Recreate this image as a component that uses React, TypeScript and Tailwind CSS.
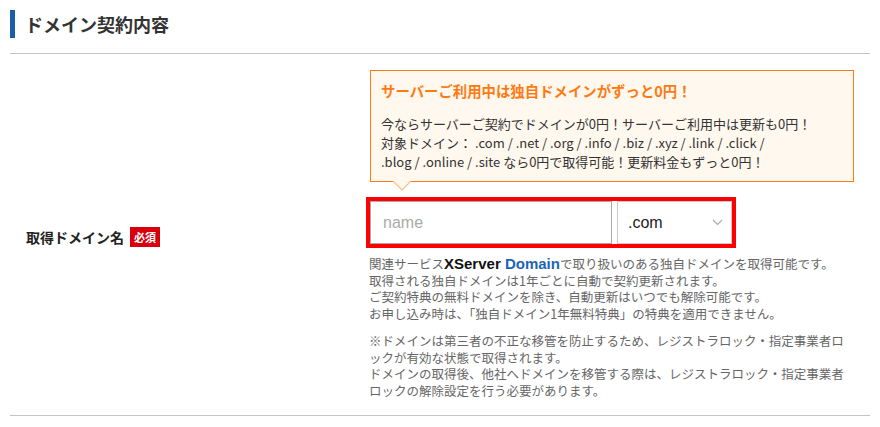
import React from "react";

const jp = { fontFamily: '"Noto Sans CJK JP", "Noto Sans", sans-serif' };
const latin = { fontFamily: '"Liberation Sans", Arial, sans-serif' };

export default function App() {
  return (
    <div className="w-[880px] h-[427px] bg-white text-[#333] overflow-hidden" style={jp}>
      <div className="pt-[10px] px-[10px]">
        <div className="border-l-[5px] border-[#1a5ea8] pl-[10px] h-[28px] flex items-center">
          <h2 className="text-[18px] font-bold leading-[28px] text-[#333]">ドメイン契約内容</h2>
        </div>
        <div className="mt-[15px] border-t border-[#c4c4c4]" />
        <div className="flex h-[362px] border-b border-[#c4c4c4]">
          <div className="w-[356px] flex items-center pl-[16px] pt-[4px]">
            <span className="text-[14px] font-bold leading-[20px] text-[#222]">取得ドメイン名</span>
            <span className="ml-[6px] bg-[#d9000d] text-white text-[11px] font-bold leading-[20px] px-[4px]">必須</span>
          </div>
          <div className="flex-1 pt-[16px]">
            <div className="relative ml-[4px] w-[484px] border border-[#ff7a12] bg-[#fff8ee] px-[10px] pt-[10px] pb-[10px]">
              <p className="text-[14.4px] font-bold leading-[20px] text-[#ff7a12]">サーバーご利用中は独自ドメインがずっと0円！</p>
              <p className="mt-[13px] text-[13px] leading-[19px] text-[#333] whitespace-nowrap">
                今ならサーバーご契約でドメインが0円！サーバーご利用中は更新も0円！<br />
                対象ドメイン： .com / .net / .org / .info / .biz / .xyz / .link / .click /<br />
                .blog / .online / .site なら0円で取得可能！更新料金もずっと0円！
              </p>
              <svg className="absolute left-[21px] bottom-[-10px]" width="20" height="10" viewBox="0 0 20 10">
                <path d="M1 0 L10 9 L19 0" fill="#fff8ee" stroke="#fbbf80" strokeWidth="1.2" />
              </svg>
            </div>
            <div className="mt-[15px] w-[370px] border-4 border-[#ff0000] flex gap-[5px]">
              <div className="w-[242px] h-[43px] border border-[#a9a9a9] bg-white flex items-center px-[12px]">
                <span className="text-[16px] text-[#aaa]" style={latin}>name</span>
              </div>
              <div className="flex-1 h-[43px] border border-[#c8c8c8] bg-white flex items-center justify-between pl-[10px] pr-[8px]">
                <span className="text-[16px] text-[#222]" style={latin}>.com</span>
                <svg width="11" height="7" viewBox="0 0 11 7">
                  <path d="M1 1 L5.5 5.5 L10 1" fill="none" stroke="#aaa" strokeWidth="1.2" />
                </svg>
              </div>
            </div>
            <div className="ml-[3px] mt-[8px] text-[12.5px] leading-[16.7px] text-[#666] whitespace-nowrap">
              <p>
                関連サービス
                <span className="font-bold text-[15px] text-[#111]" style={latin}>XServer</span>
                <span className="font-bold text-[15px] text-[#1e64b4]" style={latin}> Domain</span>
                で取り扱いのある独自ドメインを取得可能です。<br />
                取得される独自ドメインは1年ごとに自動で契約更新されます。<br />
                ご契約特典の無料ドメインを除き、自動更新はいつでも解除可能です。<br />
                お申し込み時は、「独自ドメイン1年無料特典」の特典を適用できません。
              </p>
              <p className="mt-[10px]">
                ※ドメインは第三者の不正な移管を防止するため、レジストラロック・指定事業者ロ<br />
                ックが有効な状態で取得されます。<br />
                ドメインの取得後、他社へドメインを移管する際は、レジストラロック・指定事業者<br />
                ロックの解除設定を行う必要があります。
              </p>
            </div>
          </div>
        </div>
      </div>
    </div>
  );
}
